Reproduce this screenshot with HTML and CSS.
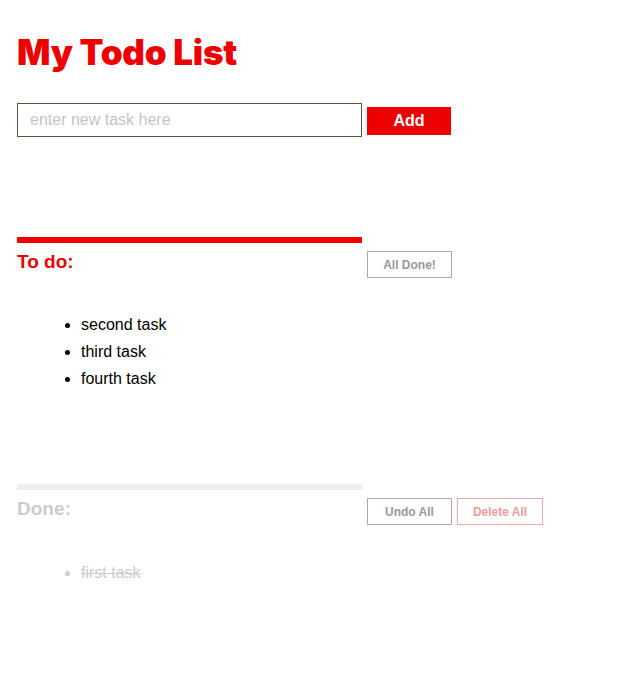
FILE: index.html
```html
<!DOCTYPE html>
<html>
<head>
<meta charset="utf-8">
<link rel="stylesheet" href="styles.css">
</head>
<body>
<div class="app">
  <h1 class="title">My Todo List</h1>
  <div class="add-row">
    <input class="task-input" type="text" placeholder="enter new task here">
    <button class="btn btn-add">Add</button>
  </div>

  <section class="section todo">
    <div class="section-head">
      <div class="head-left">
        <div class="bar bar-red"></div>
        <h2 class="section-title title-red">To do:</h2>
      </div>
      <div class="head-actions">
        <button class="btn btn-outline">All Done!</button>
      </div>
    </div>
    <ul class="task-list">
      <li>second task</li>
      <li>third task</li>
      <li>fourth task</li>
    </ul>
  </section>

  <section class="section done">
    <div class="section-head">
      <div class="head-left">
        <div class="bar bar-gray"></div>
        <h2 class="section-title title-gray">Done:</h2>
      </div>
      <div class="head-actions">
        <button class="btn btn-outline">Undo All</button>
        <button class="btn btn-outline btn-pink">Delete All</button>
      </div>
    </div>
    <ul class="task-list done-list">
      <li>first task</li>
    </ul>
  </section>
</div>
</body>
</html>
```
FILE: styles.css
```css
* { box-sizing: border-box; }
html, body { margin: 0; padding: 0; background: #fff; }
body { font-family: "Liberation Sans", Arial, sans-serif; }

.app { padding: 0 0 0 17px; }

.title {
  margin: 0;
  padding-top: 28px;
  font-family: Inter, "Liberation Sans", sans-serif;
  font-weight: 900;
  font-size: 35px;
  line-height: 48px;
  color: #ee0000;
  letter-spacing: -0.2px;
}

.add-row {
  display: flex;
  align-items: flex-start;
  gap: 5px;
  margin-top: 27px;
}

.task-input {
  width: 345px;
  height: 34px;
  border: 1px solid #5e5043;
  padding: 0 12px;
  font-family: "Liberation Sans", Arial, sans-serif;
  font-size: 16px;
  outline: none;
}
.task-input::placeholder { color: #c4c4c4; }

.btn {
  font-family: "Liberation Sans", Arial, sans-serif;
  font-weight: bold;
  cursor: pointer;
}

.btn-add {
  margin-top: 4px;
  width: 84px;
  height: 28px;
  border: none;
  background: #ee0000;
  color: #fff;
  font-size: 16px;
}

.section-head {
  display: flex;
  gap: 5px;
}
.head-left { width: 345px; }

.bar { height: 6px; }
.bar-red { background: #ee0000; }
.bar-gray { background: #eeeeee; }

.section-title {
  margin: 0;
  padding-top: 7px;
  font-size: 19px;
  line-height: 24px;
  font-weight: bold;
}
.title-red { color: #ee0000; }
.title-gray { color: #cccccc; }

.head-actions {
  display: flex;
  gap: 5px;
  padding-top: 14px;
}

.btn-outline {
  width: 85px;
  height: 27px;
  background: #fff;
  border: 1.5px solid #aaaaaa;
  color: #999999;
  font-size: 12px;
}
.btn-pink {
  width: 86px;
  border-color: #f3a8a8;
  color: #f09a9a;
}

.todo { margin-top: 100px; }
.done { margin-top: 92px; }

.task-list {
  margin: 33px 0 0 0;
  padding-left: 64px;
  font-size: 16px;
  line-height: 27px;
  color: #000;
}
.done-list {
  margin-top: 34px;
  color: #cccccc;
  text-decoration: line-through;
}
```
